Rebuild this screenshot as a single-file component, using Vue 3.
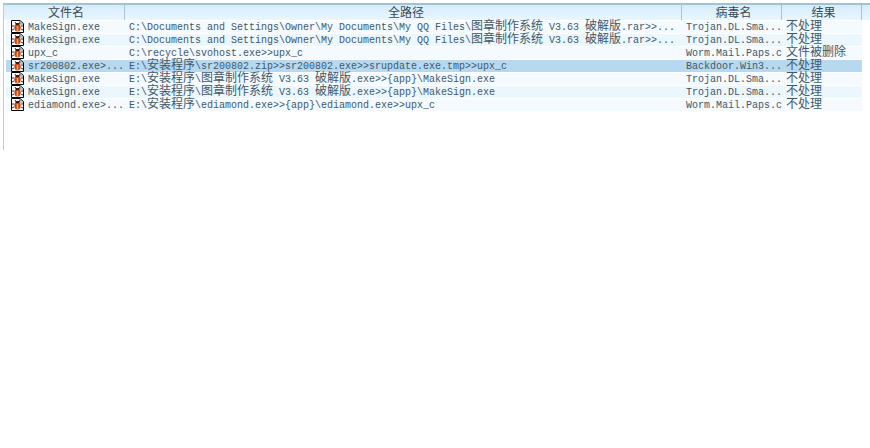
<script setup>
const headers = [
  { label: '文件名', cls: 'c1' },
  { label: '全路径', cls: 'c2' },
  { label: '病毒名', cls: 'c3' },
  { label: '结果', cls: 'c4' },
  { label: '', cls: 'c5' }
]
const rawRows = [
  ['MakeSign.exe', 'C:\\Documents and Settings\\Owner\\My Documents\\My QQ Files\\图章制作系统 V3.63 破解版.rar>>...', 'Trojan.DL.Sma...', '不处理'],
  ['MakeSign.exe', 'C:\\Documents and Settings\\Owner\\My Documents\\My QQ Files\\图章制作系统 V3.63 破解版.rar>>...', 'Trojan.DL.Sma...', '不处理'],
  ['upx_c', 'C:\\recycle\\svohost.exe>>upx_c', 'Worm.Mail.Paps.c', '文件被删除'],
  ['sr200802.exe>...', 'E:\\安装程序\\sr200802.zip>>sr200802.exe>>srupdate.exe.tmp>>upx_c', 'Backdoor.Win3...', '不处理'],
  ['MakeSign.exe', 'E:\\安装程序\\图章制作系统 V3.63 破解版.exe>>{app}\\MakeSign.exe', 'Trojan.DL.Sma...', '不处理'],
  ['MakeSign.exe', 'E:\\安装程序\\图章制作系统 V3.63 破解版.exe>>{app}\\MakeSign.exe', 'Trojan.DL.Sma...', '不处理'],
  ['ediamond.exe>...', 'E:\\安装程序\\ediamond.exe>>{app}\\ediamond.exe>>upx_c', 'Worm.Mail.Paps.c', '不处理']
]
const runs = (s) =>
  s.split(/([\u4e00-\u9fff]+)/).filter(Boolean).map((t) => ({ t, cjk: /[\u4e00-\u9fff]/.test(t) }))
const rows = rawRows.map((r, i) => ({
  id: i,
  selected: i === 3,
  cells: r.map(runs)
}))
</script>

<template>
  <div class="page">
    <div class="list">
      <div class="head">
        <div v-for="h in headers" :key="h.cls" class="hcell" :class="h.cls">{{ h.label }}</div>
      </div>
      <div class="body">
        <div v-for="r in rows" :key="r.id" class="row" :class="{ sel: r.selected }">
          <div class="icon">
            <svg width="13" height="13" viewBox="0 0 13 13">
              <path d="M0.5 0.5H9L12.5 3.5V12.5H0.5Z" fill="#fff" stroke="#000" />
              <path d="M9 1V4H12" fill="none" stroke="#888" />
              <path d="M1 6H3M1 10L3 9M12 6H10M12 10L10 9M4 2L5 4M9 2L8 4" stroke="#333" fill="none" />
              <ellipse cx="6.5" cy="7.5" rx="3.2" ry="4" fill="#c0441c" />
              <path d="M6.5 6V11" stroke="#f0b030" stroke-width="1.6" />
              <rect x="5" y="3" width="3" height="2" fill="#3a1a0a" />
            </svg>
          </div>
          <div v-for="(cell, ci) in r.cells" :key="ci" class="cell" :class="'d' + (ci + 1)">
            <template v-for="(run, ri) in cell" :key="ri"><span :class="{ cjk: run.cjk }">{{ run.t }}</span></template>
          </div>
        </div>
      </div>
    </div>
  </div>
</template>

<style scoped>
.page {
  width: 870px;
  height: 448px;
  background: #fff;
  padding-top: 3px;
  box-sizing: border-box;
  overflow: hidden;
}
.list {
  height: 147px;
  margin-left: 3px;
  border-left: 1px solid #b5cfdc;
  border-top: 2px solid #a3c2cf;
  box-sizing: border-box;
}
.head {
  display: flex;
  height: 15px;
  background: linear-gradient(#d6ecfb, #eaf6fe);
}
.hcell {
  box-sizing: border-box;
  height: 15px;
  padding-left: 4px;
  border-right: 1px solid #a9c3d6;
  font: 12px/14px "Noto Sans CJK SC", sans-serif;
  color: #3a4a58;
  text-align: center;
}
.c1 { width: 121px; }
.c2 { width: 557px; padding-left: 6px; }
.c3 { width: 100px; }
.c4 { width: 80px; }
.c5 { flex: 1; border-right: 0; padding-left: 0; }
.body {
  padding: 1px 0 0 2px;
}
.row {
  display: flex;
  width: 856px;
  height: 12px;
  margin-bottom: 1px;
  background: #f4fafe;
}
.row:nth-child(even) {
  background: #ecf7fd;
}
.row.sel {
  background: #b6d9f0;
}
.icon {
  width: 22px;
  padding-left: 5px;
  box-sizing: border-box;
  flex: none;
  height: 12px;
}
.icon svg {
  display: block;
  margin-top: -1px;
}
.cell {
  box-sizing: border-box;
  height: 12px;
  white-space: nowrap;
  color: #3f5868;
  font: 10px/14px "Liberation Mono", monospace;
}
.cjk {
  font: 12px/0 "Noto Sans CJK SC", sans-serif;
}
.d1 { width: 98px; }
.d2 { width: 557px; padding-left: 3px; }
.d3 { width: 100px; padding-left: 3px; }
.d4 { width: 79px; padding-left: 3px; }
</style>
